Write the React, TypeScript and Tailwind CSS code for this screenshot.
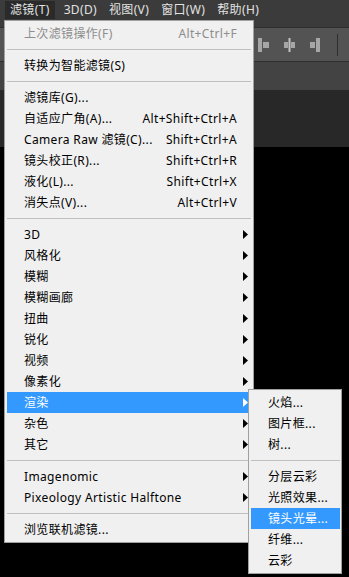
import React from 'react';

type Item =
  | { sep: true }
  | { label: string; shortcut?: string; sub?: boolean; disabled?: boolean; active?: boolean };

const MAIN_ITEMS: Item[] = [
  { label: '上次滤镜操作(F)', shortcut: 'Alt+Ctrl+F', disabled: true },
  { sep: true },
  { label: '转换为智能滤镜(S)' },
  { sep: true },
  { label: '滤镜库(G)...' },
  { label: '自适应广角(A)...', shortcut: 'Alt+Shift+Ctrl+A' },
  { label: 'Camera Raw 滤镜(C)...', shortcut: 'Shift+Ctrl+A' },
  { label: '镜头校正(R)...', shortcut: 'Shift+Ctrl+R' },
  { label: '液化(L)...', shortcut: 'Shift+Ctrl+X' },
  { label: '消失点(V)...', shortcut: 'Alt+Ctrl+V' },
  { sep: true },
  { label: '3D', sub: true },
  { label: '风格化', sub: true },
  { label: '模糊', sub: true },
  { label: '模糊画廊', sub: true },
  { label: '扭曲', sub: true },
  { label: '锐化', sub: true },
  { label: '视频', sub: true },
  { label: '像素化', sub: true },
  { label: '渲染', sub: true, active: true },
  { label: '杂色', sub: true },
  { label: '其它', sub: true },
  { sep: true },
  { label: 'Imagenomic', sub: true },
  { label: 'Pixeology Artistic Halftone', sub: true },
  { sep: true },
  { label: '浏览联机滤镜...' },
];

const RENDER_ITEMS: Item[] = [
  { label: '火焰...' },
  { label: '图片框...' },
  { label: '树...' },
  { sep: true },
  { label: '分层云彩' },
  { label: '光照效果...' },
  { label: '镜头光晕...', active: true },
  { label: '纤维...' },
  { label: '云彩' },
];

const MENUBAR = ['滤镜(T)', '3D(D)', '视图(V)', '窗口(W)', '帮助(H)'];

const Arrow = ({ white }: { white?: boolean }) => (
  <svg width="5" height="9" viewBox="0 0 5 9" className="absolute right-[3px] top-[6px]">
    <path d="M0 0 L5 4.5 L0 9 Z" fill={white ? '#ffffff' : '#000000'} />
  </svg>
);

const MenuRows = ({ items }: { items: Item[] }) => (
  <>
    {items.map((item, i) =>
      'sep' in item ? (
        <div key={i} className="h-[11px] flex items-center">
          <div className="h-px w-full bg-[#c0c0c0]" />
        </div>
      ) : (
        <div
          key={i}
          className={`relative h-[21px] flex items-center pl-[17px] pr-[14px] whitespace-nowrap ${
            item.active ? 'bg-[#3399ff] text-white' : item.disabled ? 'text-[#8d8d8d]' : 'text-black'
          }`}
        >
          <span className="flex-1">{item.label}</span>
          {item.shortcut && <span>{item.shortcut}</span>}
          {item.sub && <Arrow white={item.active} />}
        </div>
      )
    )}
  </>
);

// alignment / distribute icons on the options bar
const DistIcon = ({ kind }: { kind: 0 | 1 | 2 }) => (
  <svg width="11" height="14" viewBox="0 0 11 14">
    {kind === 0 && (
      <>
        <rect x="0" y="0" width="4" height="14" fill="#a6a6a6" />
        <rect x="5" y="4" width="6" height="6" fill="#a6a6a6" />
      </>
    )}
    {kind === 1 && (
      <>
        <rect x="0" y="4" width="4" height="6" fill="#a6a6a6" />
        <rect x="4.5" y="0" width="2" height="14" fill="#c4c4c4" />
        <rect x="7" y="4" width="4" height="6" fill="#a6a6a6" />
      </>
    )}
    {kind === 2 && (
      <>
        <rect x="0" y="4" width="5" height="6" fill="#a6a6a6" />
        <rect x="6" y="0" width="4" height="14" fill="#a6a6a6" />
      </>
    )}
  </svg>
);

const App: React.FC = () => {
  return (
    <div
      className="relative w-[349px] h-[577px] overflow-hidden bg-black text-[12px] leading-none tracking-[0.35px]"
      style={{ fontFamily: '"Noto Sans", "Noto Sans CJK SC", sans-serif' }}
    >
      {/* menu bar */}
      <div className="h-[20px] bg-[#3b3b3b] flex items-center pl-[5px] text-[#e2e2e2]">
        {MENUBAR.map((m, i) => (
          <div
            key={m}
            className={`h-[18px] flex items-center ${i === 0 ? 'bg-[#2a2a2a] px-[5px] mr-[9px]' : 'mr-[12px]'}`}
          >
            {m}
          </div>
        ))}
      </div>
      <div className="h-[7px] bg-[#3b3b3b]" />
      {/* options bar */}
      <div className="h-[34px] bg-[#535353] border-t border-[#2e2e2e] flex items-center pl-[258px]">
        <div className="flex items-center gap-[15px]">
          <DistIcon kind={0} />
          <DistIcon kind={1} />
          <DistIcon kind={2} />
        </div>
        <div className="ml-[16px] w-px h-[22px] bg-[#2e2e2e]" />
      </div>
      <div className="h-[29px] bg-[#434343] border-t border-[#2e2e2e]" />
      <div className="h-[57px] bg-[#282828]" />

      {/* filter menu */}
      <div className="absolute left-[4px] top-[20px] w-[250px] bg-[#f0f0f0] border border-[#a0a0a0] p-[2px]">
        <MenuRows items={MAIN_ITEMS} />
      </div>

      {/* render submenu */}
      <div className="absolute left-[248px] top-[389px] w-[94px] bg-[#f0f0f0] border border-[#a0a0a0] py-[2px] pl-[2px] pr-[1px]">
        <MenuRows items={RENDER_ITEMS} />
      </div>
    </div>
  );
};

export default App;
